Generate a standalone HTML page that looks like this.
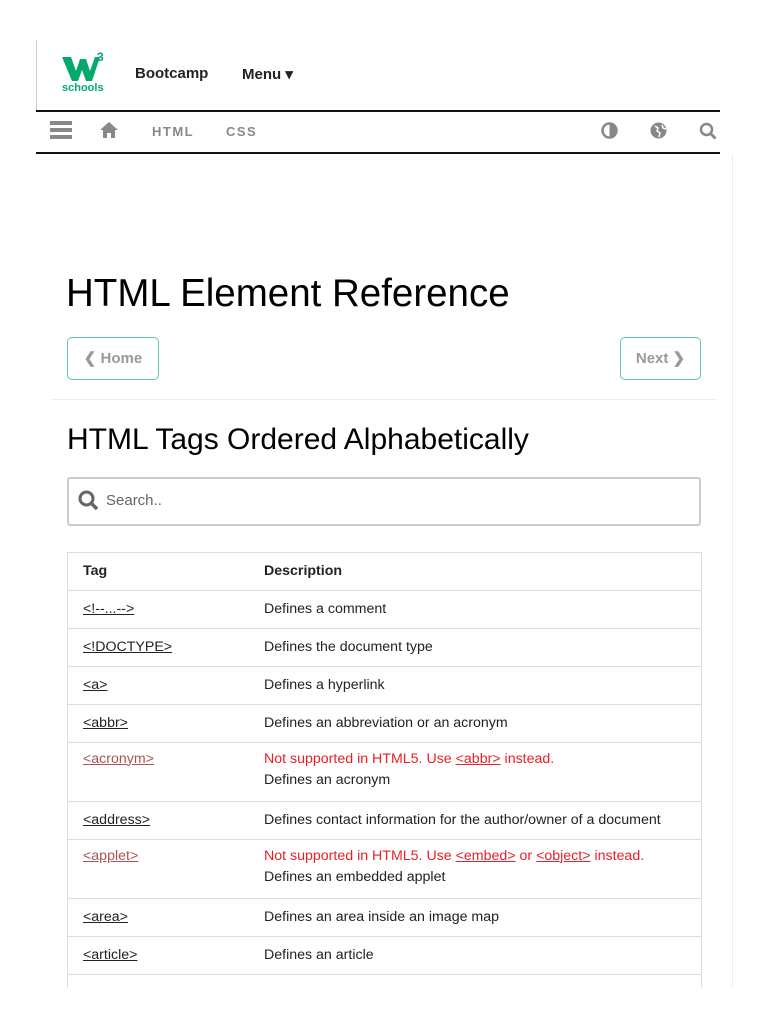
<!DOCTYPE html>
<html><head><meta charset="utf-8"><style>
*{margin:0;padding:0;box-sizing:border-box}
body{width:768px;height:1024px;background:#fff;font-family:"Liberation Sans",sans-serif;position:relative;overflow:hidden;color:#000}
.abs{position:absolute}
.navtxt{font-weight:bold;font-size:15px;color:#222}
.gray{color:#888;font-weight:bold;font-size:13px;letter-spacing:1.5px}
table{border-collapse:collapse;width:634px;font-size:14.2px;color:#222}
td{border-top:1px solid #ddd;padding:0 15px;vertical-align:top}
td:first-child{width:181px}
a{color:#222;text-decoration:underline}
.red{color:#e8202a}
.red a{color:#e8202a}
.dep{color:#a55}
</style></head><body>
<div class="abs" style="left:36px;top:40px;width:1px;height:71px;background:#ccc"></div>
<div class="abs" style="left:62px;top:54px">
<svg width="44" height="30" viewBox="0 0 44 30"><path d="M0 3h9l5 14 4-12h6l4 12 5-14h5l-8 24h-6l-4-11-4 11h-6z" fill="#04aa6d"/></svg>
</div>
<div class="abs" style="left:97px;top:50px;font-size:12px;font-weight:bold;color:#04aa6d">3</div>
<div class="abs" style="left:62px;top:82px;font-size:11px;font-weight:bold;color:#04aa6d">schools</div>
<div class="abs navtxt" style="left:135px;top:65px">Bootcamp</div>
<div class="abs navtxt" style="left:242px;top:65px">Menu ▾</div>
<div class="abs" style="left:36px;top:110px;width:684px;height:2px;background:#111"></div>
<div class="abs" style="left:36px;top:152px;width:684px;height:2px;background:#111"></div>
<div class="abs" style="left:50px;top:121px;width:22px;height:4px;background:#888;box-shadow:0 7px 0 #888,0 14px 0 #888"></div>
<svg class="abs" style="left:99px;top:121px" width="20" height="17" viewBox="0 0 20 17"><path d="M10 1 1 9h3v8h4v-5h4v5h4V9h3z" fill="#888"/></svg>
<div class="abs gray" style="left:152px;top:124px">HTML</div>
<div class="abs gray" style="left:226px;top:124px">CSS</div>
<svg class="abs" style="left:601px;top:122px" width="17" height="17"><circle cx="8.5" cy="8.5" r="7" fill="none" stroke="#888" stroke-width="2.5"/><path d="M8.5 1.5a7 7 0 0 1 0 14z" fill="#888"/></svg>
<svg class="abs" style="left:650px;top:122px" width="17" height="17"><circle cx="8.5" cy="8.5" r="8" fill="#888"/><path d="M5 4l3 2-1 3 3 2-1 4M12 3l1 3 3 1" stroke="#fff" stroke-width="1.5" fill="none"/></svg>
<svg class="abs" style="left:699px;top:122px" width="19" height="19"><circle cx="7.5" cy="7.5" r="5.5" fill="none" stroke="#888" stroke-width="2.5"/><path d="M11.5 11.5l5 5" stroke="#888" stroke-width="2.8"/></svg>
<div class="abs" style="left:732px;top:154px;width:1px;height:834px;background:#eee"></div>
<div class="abs" style="left:66px;top:272px;font-size:38.5px;color:#000">HTML Element Reference</div>
<div class="abs" style="left:67px;top:337px;width:92px;height:43px;border:1px solid #5fc9a0;border-radius:5px;color:#999;font-weight:bold;font-size:15px;text-align:center;line-height:41px">❮ Home</div>
<div class="abs" style="left:620px;top:337px;width:81px;height:43px;border:1px solid #5fc9a0;border-radius:5px;color:#999;font-weight:bold;font-size:15px;text-align:center;line-height:41px">Next ❯</div>
<div class="abs" style="left:52px;top:399px;width:664px;height:1px;background:#eee"></div>
<div class="abs" style="left:67px;top:423px;font-size:30px">HTML Tags Ordered Alphabetically</div>
<div class="abs" style="left:67px;top:477px;width:634px;height:49px;border:2px solid #ccc;border-radius:3px"></div>
<svg class="abs" style="left:77px;top:489px" width="24" height="24"><circle cx="9.5" cy="9.5" r="6.5" fill="none" stroke="#666" stroke-width="3"/><path d="M14 14l6 6" stroke="#666" stroke-width="3.5"/></svg>
<div class="abs" style="left:106px;top:492px;font-size:15px;color:#666">Search..</div>
<div class="abs" style="left:67px;top:552px;width:635px;height:440px;border:1px solid #ddd;overflow:hidden">
<table>
<tr style="height:37px"><td style="border:0;padding-top:10px;font-weight:bold">Tag</td><td style="border:0;padding-top:10px;font-weight:bold">Description</td></tr>
<tr style="height:38px"><td style="padding-top:10px"><a>&lt;!--...--&gt;</a></td><td style="padding-top:10px">Defines a comment</td></tr>
<tr style="height:38px"><td style="padding-top:10px"><a>&lt;!DOCTYPE&gt;</a></td><td style="padding-top:10px">Defines the document type</td></tr>
<tr style="height:38px"><td style="padding-top:10px"><a>&lt;a&gt;</a></td><td style="padding-top:10px">Defines a hyperlink</td></tr>
<tr style="height:38px"><td style="padding-top:10px"><a>&lt;abbr&gt;</a></td><td style="padding-top:10px">Defines an abbreviation or an acronym</td></tr>
<tr style="height:59px"><td style="padding-top:8px"><a class="dep">&lt;acronym&gt;</a></td><td style="padding-top:6px;line-height:21px"><span class="red">Not supported in HTML5. Use <a>&lt;abbr&gt;</a> instead.</span><br>Defines an acronym</td></tr>
<tr style="height:38px"><td style="padding-top:10px"><a>&lt;address&gt;</a></td><td style="padding-top:10px">Defines contact information for the author/owner of a document</td></tr>
<tr style="height:59px"><td style="padding-top:8px"><a class="dep">&lt;applet&gt;</a></td><td style="padding-top:6px;line-height:21px"><span class="red">Not supported in HTML5. Use <a>&lt;embed&gt;</a> or <a>&lt;object&gt;</a> instead.</span><br>Defines an embedded applet</td></tr>
<tr style="height:38px"><td style="padding-top:10px"><a>&lt;area&gt;</a></td><td style="padding-top:10px">Defines an area inside an image map</td></tr>
<tr style="height:38px"><td style="padding-top:10px"><a>&lt;article&gt;</a></td><td style="padding-top:10px">Defines an article</td></tr>
<tr style="height:38px"><td></td><td></td></tr>
</table></div>
<div class="abs" style="left:0;top:988px;width:768px;height:36px;background:#fff"></div>
</body></html>
